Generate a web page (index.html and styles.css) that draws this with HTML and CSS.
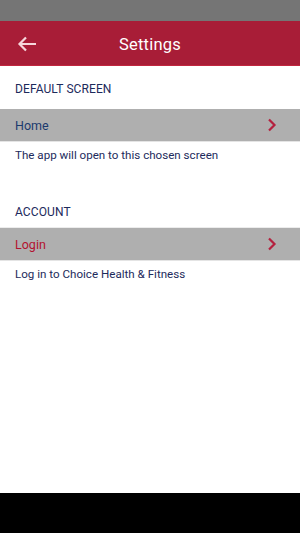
FILE: index.html
```html
<!DOCTYPE html>
<html lang="en">

<head>
    <meta charset="UTF-8">
    <meta name="viewport" content="width=device-width, initial-scale=1.0">
    <title>Settings</title>
    <link rel="stylesheet" href="styles.css">
</head>

<body>
    <div class="screen">
        <div class="status-bar"></div>

        <header class="app-bar">
            <button class="back-button" aria-label="Back">
                <svg width="20" height="16" viewBox="0 0 20 16">
                    <path d="M19 8H2.5M9 1.5L2.5 8L9 14.5" fill="none" stroke="currentColor" stroke-width="2.2" />
                </svg>
            </button>
            <h1>Settings</h1>
        </header>

        <main class="content">
            <h2 class="section-title">DEFAULT SCREEN</h2>
            <div class="setting-row">
                <span class="row-label">Home</span>
                <svg class="chevron" width="10" height="14" viewBox="0 0 10 14">
                    <path d="M2 1.5L7.5 7L2 12.5" fill="none" stroke="currentColor" stroke-width="2.2" />
                </svg>
            </div>
            <p class="hint">The app will open to this chosen screen</p>

            <h2 class="section-title account">ACCOUNT</h2>
            <div class="setting-row">
                <span class="row-label login">Login</span>
                <svg class="chevron" width="10" height="14" viewBox="0 0 10 14">
                    <path d="M2 1.5L7.5 7L2 12.5" fill="none" stroke="currentColor" stroke-width="2.2" />
                </svg>
            </div>
            <p class="hint">Log in to Choice Health &amp; Fitness</p>
        </main>

        <div class="nav-bar"></div>
    </div>
</body>

</html>
```

FILE: styles.css
```css
* {
    margin: 0;
    padding: 0;
    box-sizing: border-box;
}

body {
    font-family: Roboto, 'Noto Sans', sans-serif;
    background: #fff;
    color: #1d2a5c;
}

.screen {
    width: 300px;
    height: 533px;
    display: flex;
    flex-direction: column;
}

.status-bar {
    height: 21px;
    background: #757575;
}

.app-bar {
    height: 45px;
    background: #a81d37;
    border-bottom: 1px solid #c2263f;
    display: flex;
    align-items: center;
    justify-content: center;
    position: relative;
}

.app-bar h1 {
    color: #fff;
    font-size: 16.5px;
    font-weight: 400;
    letter-spacing: 0.2px;
    padding-top: 2px;
}

.back-button {
    position: absolute;
    left: 17px;
    top: 15px;
    background: none;
    border: none;
    color: #f6d7dc;
    display: flex;
}

.content {
    flex: 1;
}

.section-title {
    font-size: 12px;
    font-weight: 400;
    letter-spacing: 0.1px;
    padding: 16px 15px 0;
    height: 43px;
}

.section-title.account {
    margin-top: 29px;
    height: 37px;
    padding-top: 14px;
    border-bottom: 1px solid #ececec;
}

.setting-row {
    height: 33px;
    background: #afafaf;
    border-bottom: 1px solid #e4e4e4;
    display: flex;
    align-items: center;
    justify-content: space-between;
    padding: 0 23px 0 15px;
}

.row-label {
    font-size: 12.5px;
    color: #1b3a6e;
}

.row-label.login {
    color: #b31230;
}

.chevron {
    color: #b4213f;
}

.hint {
    font-size: 11.6px;
    padding: 6px 15px 0;
    color: #1d2a5c;
}

.nav-bar {
    height: 40px;
    background: #000;
}
```
